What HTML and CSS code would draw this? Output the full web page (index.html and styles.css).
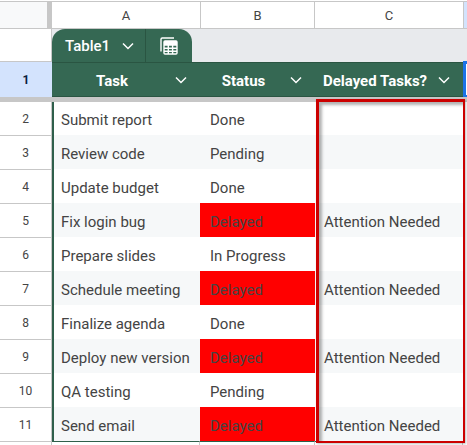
FILE: index.html
```html
<!DOCTYPE html>
<html lang="en">
<head>
  <meta charset="UTF-8">
  <title>Table1</title>
  <link rel="stylesheet" href="styles.css">
</head>
<body>
  <div class="sheet">
    <!-- Column letters -->
    <div class="col-row">
      <div class="corner"></div>
      <div class="col-head col-a">A</div>
      <div class="col-head col-b">B</div>
      <div class="col-head col-c">C</div>
      <div class="col-head col-d"></div>
    </div>

    <!-- Table tab -->
    <div class="tab-row">
      <div class="gutter-blank"></div>
      <div class="tab-area">
        <div class="table-tab">
          <div class="tab-name">
            <span>Table1</span>
            <svg class="chev" viewBox="0 0 12 8" width="12" height="8"><path d="M1 1.5l5 5 5-5" fill="none" stroke="#fff" stroke-width="1.5"/></svg>
          </div>
          <div class="tab-icon">
            <svg viewBox="0 0 20 20" width="20" height="20" fill="none" stroke="#fff" stroke-width="1.4">
              <path d="M2 15.5V3.2Q2 2 3.2 2H15"/>
              <rect x="5" y="5" width="13" height="13" rx="1"/>
              <path d="M5 9h13M5 12.2h13M5 15.2h13M9.3 9v9M13.6 9v9"/>
              <rect x="5" y="5" width="13" height="4" fill="#fff" stroke="none"/>
            </svg>
          </div>
        </div>
      </div>
    </div>

    <!-- Header row -->
    <div class="head-row">
      <div class="row-num row-num-active">1</div>
      <div class="head-cell col-a">
        <span class="head-label">Task</span>
        <svg class="chev" viewBox="0 0 12 8" width="12" height="8"><path d="M1 1.5l5 5 5-5" fill="none" stroke="#fff" stroke-width="1.5"/></svg>
      </div>
      <div class="head-cell col-b">
        <span class="head-label">Status</span>
        <svg class="chev" viewBox="0 0 12 8" width="12" height="8"><path d="M1 1.5l5 5 5-5" fill="none" stroke="#fff" stroke-width="1.5"/></svg>
      </div>
      <div class="head-cell col-c">
        <span class="head-label">Delayed Tasks?</span>
        <svg class="chev" viewBox="0 0 12 8" width="12" height="8"><path d="M1 1.5l5 5 5-5" fill="none" stroke="#fff" stroke-width="1.5"/></svg>
      </div>
      <div class="selected-cell"></div>
    </div>

    <div class="freeze-bar"></div>

    <!-- Data rows -->
    <div class="body-rows">
      <div class="row"><div class="row-num">2</div><div class="cell col-a">Submit report</div><div class="cell col-b">Done</div><div class="cell col-c"></div></div>
      <div class="row alt"><div class="row-num">3</div><div class="cell col-a">Review code</div><div class="cell col-b">Pending</div><div class="cell col-c"></div></div>
      <div class="row"><div class="row-num">4</div><div class="cell col-a">Update budget</div><div class="cell col-b">Done</div><div class="cell col-c"></div></div>
      <div class="row alt"><div class="row-num">5</div><div class="cell col-a">Fix login bug</div><div class="cell col-b delayed">Delayed</div><div class="cell col-c">Attention Needed</div></div>
      <div class="row"><div class="row-num">6</div><div class="cell col-a">Prepare slides</div><div class="cell col-b">In Progress</div><div class="cell col-c"></div></div>
      <div class="row alt"><div class="row-num">7</div><div class="cell col-a">Schedule meeting</div><div class="cell col-b delayed">Delayed</div><div class="cell col-c">Attention Needed</div></div>
      <div class="row"><div class="row-num">8</div><div class="cell col-a">Finalize agenda</div><div class="cell col-b">Done</div><div class="cell col-c"></div></div>
      <div class="row alt"><div class="row-num">9</div><div class="cell col-a">Deploy new version</div><div class="cell col-b delayed">Delayed</div><div class="cell col-c">Attention Needed</div></div>
      <div class="row"><div class="row-num">10</div><div class="cell col-a">QA testing</div><div class="cell col-b">Pending</div><div class="cell col-c"></div></div>
      <div class="row alt"><div class="row-num">11</div><div class="cell col-a">Send email</div><div class="cell col-b delayed">Delayed</div><div class="cell col-c">Attention Needed</div></div>
      <div class="tail-row">
        <div class="tail-num"></div>
        <div class="tail-cell col-a"></div>
        <div class="tail-cell col-b"></div>
        <div class="tail-cell col-c"></div>
      </div>
      <!-- Red annotation box drawn over column C -->
      <div class="highlight-box"></div>
    </div>
  </div>
</body>
</html>
```

FILE: styles.css
```css
* {
  margin: 0;
  padding: 0;
  box-sizing: border-box;
}

body {
  background-color: #fff;
  font-family: Roboto, sans-serif;
  font-size: 15px;
  color: #444;
  overflow: hidden;
}

.sheet {
  width: 467px;
  height: 445px;
  padding-top: 1px;
  overflow: hidden;
}

.col-a { width: 148px; }
.col-b { width: 115px; }
.col-c { width: 148px; }

/* Column letters */
.col-row {
  display: flex;
  height: 28px;
  border-top: 1px solid #c7c7c7;
  border-bottom: 1px solid #c7c7c7;
}

.corner {
  width: 52px;
  background-color: #f8f9fa;
  border-right: 5px solid #c7c7c7;
}

.col-head {
  display: flex;
  align-items: center;
  justify-content: center;
  font-size: 13px;
  color: #444;
  border-right: 1px solid #c7c7c7;
}

.col-head.col-a { width: 149px; }
.col-head.col-b { width: 114px; }
.col-head.col-c { width: 149px; }

.col-d {
  flex: 1;
  background-color: #d3e3fd;
  border-right: 0;
}

/* Table tab */
.tab-row {
  display: flex;
  height: 33px;
}

.gutter-blank {
  width: 52px;
  border-right: 1px solid #c7c7c7;
  border-bottom: 1px solid #c7c7c7;
}

.tab-area {
  flex: 1;
  background-color: #e8eaed;
}

.table-tab {
  display: flex;
  width: 140px;
  height: 33px;
  background-color: #356853;
  border-radius: 13px 13px 0 0;
  color: #fff;
}

.tab-name {
  display: flex;
  align-items: center;
  gap: 12px;
  width: 94px;
  padding-left: 13px;
  font-size: 15px;
  font-weight: 500;
  border-right: 1px solid #2a5542;
}

.tab-icon {
  flex: 1;
  display: flex;
  align-items: center;
  justify-content: center;
}

/* Header row */
.head-row {
  display: flex;
  height: 35px;
}

.row-num {
  width: 52px;
  flex-shrink: 0;
  display: flex;
  align-items: center;
  justify-content: center;
  font-size: 12px;
  color: #444;
  border-top: 1px solid #c7c7c7;
  border-right: 1px solid #c7c7c7;
}

.row-num-active {
  background-color: #d3e3fd;
  color: #0b1f40;
  font-weight: 700;
  border-top: 0;
  border-right: 0;
}

.head-cell {
  display: flex;
  align-items: center;
  padding-right: 13px;
  background-color: #356853;
  border-top: 1px solid #2a5542;
  border-bottom: 1px solid #2a5542;
  color: #fff;
  font-size: 15px;
  font-weight: 700;
}

.head-label {
  flex: 1;
  padding-top: 2px;
  padding-right: 3px;
  text-align: center;
  white-space: nowrap;
}

.selected-cell {
  flex: 1;
  border: 3px solid #1a73e8;
  border-right: 0;
  border-bottom-width: 2px;
  margin-top: -1px;
}

.freeze-bar {
  position: relative;
  z-index: 1;
  height: 5px;
  margin-bottom: -1px;
  background-color: #c7c7c7;
}

/* Data rows */
.body-rows {
  position: relative;
}

.row {
  display: flex;
  height: 34px;
}

.cell {
  display: flex;
  align-items: center;
  padding-top: 4px;
  padding-left: 10px;
  color: #444;
  white-space: nowrap;
}

.row .col-a {
  padding-left: 7px;
  border-left: 2px solid #2f5f4b;
}

.row .col-c {
  padding-left: 9px;
}

.row.alt .cell {
  background-color: #f6f8f9;
}

.row.alt .cell.delayed {
  background-color: #ff0000;
}

.tail-row {
  display: flex;
  height: 4px;
}

.tail-num {
  width: 52px;
  border-top: 1px solid #c7c7c7;
  border-right: 1px solid #c7c7c7;
}

.tail-cell {
  border-top: 1px solid #2f5f4b;
  border-right: 1px solid #c7c7c7;
}

.highlight-box {
  position: absolute;
  z-index: 2;
  top: -2px;
  left: 316px;
  width: 149px;
  height: 344px;
  border: solid #cc0000;
  border-width: 3px 2px 2px 3px;
  box-shadow: inset 3px 3px 3px rgba(0, 0, 0, 0.3), 1px 1px 2px rgba(0, 0, 0, 0.25);
}
```
